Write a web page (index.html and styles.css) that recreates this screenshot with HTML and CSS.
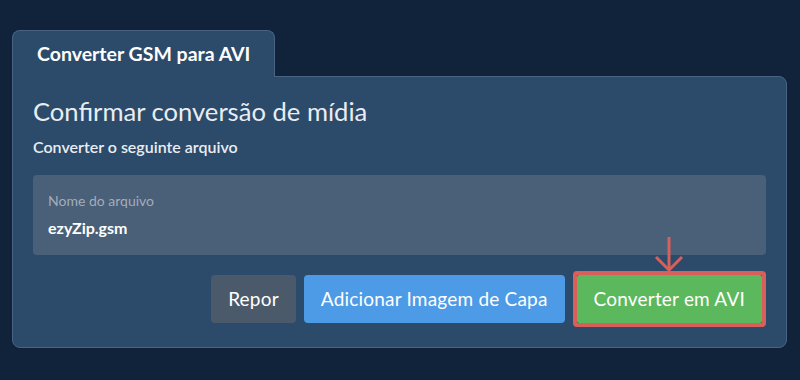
FILE: index.html
```html
<!DOCTYPE html>
<html lang="pt">

<head>
    <meta charset="UTF-8">
    <meta name="viewport" content="width=device-width, initial-scale=1.0">
    <title>Converter GSM para AVI</title>
    <link rel="stylesheet" href="styles.css">
</head>

<body>
    <div class="card">
        <div class="card__tab">Converter GSM para AVI</div>
        <div class="card__body">
            <h2 class="card__title">Confirmar conversão de mídia</h2>
            <p class="card__subtitle">Converter o seguinte arquivo</p>

            <div class="file-box">
                <span class="file-box__label">Nome do arquivo</span>
                <span class="file-box__name">ezyZip.gsm</span>
            </div>

            <div class="actions">
                <button class="btn btn--grey">Repor</button>
                <button class="btn btn--blue">Adicionar Imagem de Capa</button>
                <div class="highlight">
                    <svg class="highlight__arrow" width="30" height="36" viewBox="0 0 30 36">
                        <line x1="15" y1="1" x2="15" y2="34" />
                        <polyline points="2,21 15,34 28,21" />
                    </svg>
                    <button class="btn btn--green">Converter em AVI</button>
                </div>
            </div>
        </div>
    </div>
</body>

</html>
```

FILE: styles.css
```css
:root {
    --ff-primary: 'Lato', 'Noto Sans', sans-serif;
    --clr-bg: #10233a;
    --clr-panel: #2c4a6a;
    --clr-border: #4a6383;
    --clr-text: #e9edf1;
    --clr-red: #d9605a;
}

* {
    margin: 0;
    padding: 0;
    box-sizing: border-box;
}

body {
    background: var(--clr-bg);
    color: var(--clr-text);
    font-family: var(--ff-primary);
    padding: 30px 13px 0 12px;
}

.card__tab {
    display: inline-block;
    position: relative;
    z-index: 1;
    height: 47px;
    margin-bottom: -1px;
    padding: 0 24px;
    line-height: 46px;
    font-size: 19.5px;
    font-weight: 700;
    color: #fff;
    background: var(--clr-panel);
    border: 1px solid var(--clr-border);
    border-bottom: 0;
    border-radius: 8px 8px 0 0;
}

.card__body {
    background: var(--clr-panel);
    border: 1px solid var(--clr-border);
    border-radius: 0 8px 8px 8px;
    padding: 19px 20px 20px;
}

.card__title {
    font-size: 25.6px;
    font-weight: 400;
    line-height: 1.2;
}

.card__subtitle {
    margin-top: 10px;
    font-size: 16px;
    font-weight: 600;
    line-height: 1.2;
}

.file-box {
    display: flex;
    flex-direction: column;
    gap: 8px;
    margin-top: 19px;
    padding: 18px 15px 18px;
    background: #4a5f78;
    border-radius: 4px;
}

.file-box__label {
    font-size: 14px;
    line-height: 1.2;
    color: #a3adba;
}

.file-box__name {
    font-size: 16px;
    font-weight: 700;
    line-height: 1.2;
    color: #fff;
}

.actions {
    display: flex;
    justify-content: flex-end;
    align-items: center;
    gap: 8px;
    margin-top: 16px;
}

.btn {
    height: 48px;
    padding: 0 17px;
    border: 0;
    border-radius: 4px;
    font-family: var(--ff-primary);
    font-size: 19px;
    font-weight: 400;
    letter-spacing: 0.2px;
    color: #fff;
    cursor: pointer;
}

.btn--grey {
    background: #4b5a6b;
}

.btn--blue {
    background: #4d9be6;
}

.btn--green {
    display: block;
    background: #5cb85c;
    border-radius: 2px;
}

.highlight {
    position: relative;
    border: 4px solid var(--clr-red);
    border-radius: 4px;
}

.highlight__arrow {
    position: absolute;
    left: 50%;
    bottom: 100%;
    margin-left: -15px;
    margin-bottom: 3px;
    fill: none;
    stroke: var(--clr-red);
    stroke-width: 3;
}
```
